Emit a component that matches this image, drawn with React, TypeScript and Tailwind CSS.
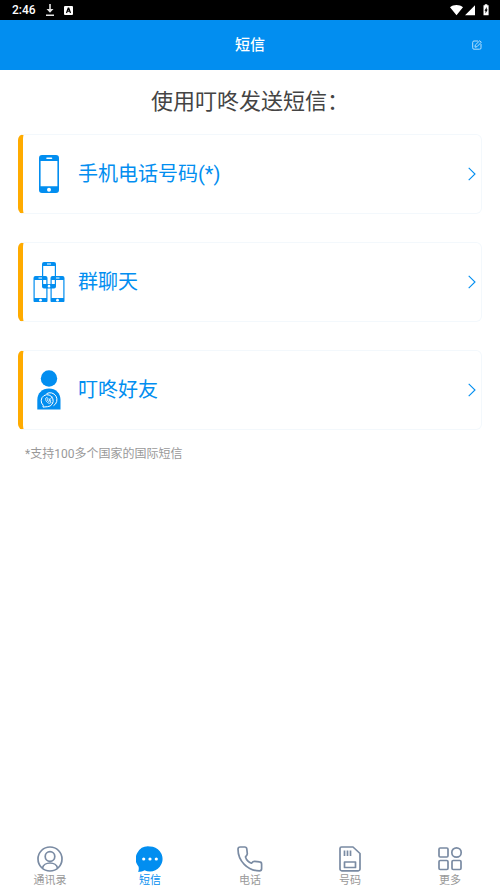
import type { FC, ReactNode } from 'react';

const PhoneShape: FC = () => (
  <>
    <path
      fillRule="evenodd"
      d="M3 0h14a3 3 0 0 1 3 3v32a3 3 0 0 1-3 3H3a3 3 0 0 1-3-3V3a3 3 0 0 1 3-3ZM1.6 6v25.2h16.8V6ZM8 2.5a.8.8 0 0 0 0 1.6h4.5a.8.8 0 0 0 0-1.6Z"
    />
    <circle cx="10" cy="34.8" r="2" fill="#fff" />
  </>
);

const PhoneIcon: FC = () => (
  <svg className="h-10 w-8" viewBox="0 0 32 40" fill="#028ef0">
    <g transform="translate(6 1)">
      <PhoneShape />
    </g>
  </svg>
);

const SmallPhone: FC<{ x: number; y: number }> = ({ x, y }) => (
  <g transform={`translate(${x} ${y})`}>
    <path
      fillRule="evenodd"
      d="M2 0h10a2 2 0 0 1 2 2v22.500a2 2 0 0 1-2 2H2a2 2 0 0 1-2-2V2a2 2 0 0 1 2-2ZM1.200 4v18h11.600V4ZM5 1.500v1h4v-1Z"
    />
    <circle cx="7" cy="24.2" r="1.400" fill="#fff" />
  </g>
);

const GroupIcon: FC = () => (
  <svg className="h-10 w-8" viewBox="0 0 32 40" fill="#028ef0">
    <SmallPhone x={9} y={0} />
    <SmallPhone x={0.5} y={14} />
    <SmallPhone x={17.5} y={14} />
  </svg>
);

const FriendIcon: FC = () => (
  <svg className="h-10 w-8" viewBox="0 0 32 40" fill="#028ef0">
    <circle cx="16" cy="8.500" r="8.200" />
    <path d="M4.300 39.500V30c0-7 5-11.500 11.700-11.500S27.500 23 27.500 30v9.500Z" />
    <g fill="none" stroke="#fff" strokeWidth="1">
      <path d="M10.200 35.200a6 6 0 1 1 4.300 1.500l-4.500.4Z" />
      <path d="M13.500 23.700a6.500 6.500 0 1 1 7 12" />
      <path d="M12.700 28.200c-.4 3 2 5.500 4.600 5l.8-1.200-1.500-1-1 .6c-.8-.4-1.200-1-1.300-1.900l.7-.8-.9-1.500Z" strokeWidth=".8" />
      <path d="m16.200 30.300 3.300-3.600m-3.300 1.800v1.800h2" strokeWidth=".8" />
    </g>
  </svg>
);

const options: { label: string; icon: ReactNode }[] = [
  { label: '手机电话号码(*)', icon: <PhoneIcon /> },
  { label: '群聊天', icon: <GroupIcon /> },
  { label: '叮咚好友', icon: <FriendIcon /> },
];

const tabs: { label: string; active?: boolean; icon: ReactNode }[] = [
  {
    label: '通讯录',
    icon: (
      <>
        <circle cx="14" cy="14" r="12" />
        <circle cx="14" cy="11.500" r="4.800" />
        <path d="M6.500 23c.6-3 3.800-5 7.500-5s6.900 2 7.500 5" />
      </>
    ),
  },
  {
    label: '短信',
    active: true,
    icon: (
      <>
        <path
          d="M14 1.500a12.500 12.500 0 1 1-5.500 23.700c-2 1.200-4.200 1.700-6.500 1.600.8-1.500 1-3 .6-5A12.500 12.500 0 0 1 14 1.500Z"
          fill="#028ef0"
          stroke="none"
        />
        <g fill="#fff" stroke="none">
          <circle cx="7.700" cy="14" r="1.600" />
          <circle cx="14" cy="14" r="1.600" />
          <circle cx="20.300" cy="14" r="1.600" />
        </g>
      </>
    ),
  },
  {
    label: '电话',
    icon: (
      <path d="M2 4.200C2 2.800 3 2 4.300 2h4.400c1.300 0 2 .8 2.100 2l.5 4.700c.1 1.300-.5 2-1.800 3.200.8 2.600 3.300 5.300 6 6.300 1-1.300 1.900-1.900 3.200-1.800l4.800.5c1.300.1 2.100.9 2.100 2.200v4.700c0 1.200-.8 2-2.100 2C11.500 25.800 2 15.700 2 4.200Z" />
    ),
  },
  {
    label: '号码',
    icon: (
      <>
        <path d="M5.500 2h11.500l7 6.500V24a1.800 1.800 0 0 1-1.800 1.800H5.800A1.800 1.800 0 0 1 4 24V3.500A1.500 1.500 0 0 1 5.500 2Z" />
        <path d="M8.500 5.500v5.500M11.500 5.500v5.500M14.500 5.500v5.500" />
        <path d="M8.500 17h11v5.500h-11Z" />
      </>
    ),
  },
  {
    label: '更多',
    icon: (
      <>
        <rect x="3" y="3" width="9" height="9" rx="1.200" />
        <circle cx="20.500" cy="7.500" r="4.700" />
        <rect x="3" y="15.500" width="9" height="9" rx="1.200" />
        <rect x="16" y="15.500" width="9" height="9" rx="1.200" />
      </>
    ),
  },
];

const StatusBar: FC = () => (
  <div className="flex h-5 items-center justify-between bg-black pl-3 pr-2 text-white">
    <div className="flex items-center">
      <span className="w-8 text-xs font-medium leading-5">2:46</span>
      <svg className="h-3 w-3" viewBox="0 0 12 12" fill="#e5e5e5">
        <path d="M5.200 0h1.600v5H9.500L6 8.700 2.500 5h2.700ZM2 10.500h8V12H2Z" />
      </svg>
      <svg className="ml-2 h-[9px] w-[9px]" viewBox="0 0 9 9">
        <rect width="9" height="9" rx="1" fill="#fff" />
        <path d="M2.500 7 4.200 2h.6L6.500 7M3.200 5.200h2.600" fill="none" stroke="#000" strokeWidth="1.200" />
      </svg>
    </div>
    <svg className="h-3 w-[42px]" viewBox="0 0 42 12" fill="#fff">
      <path d="M0 3.200C3.500.3 9.500.3 13 3.200L6.500 11.200ZM25 1.200v10H15ZM33.500 1.300h1.300V.3h2.500v1h1.300v10h-5.100Z" />
      <path d="M36.700 3v2.500h1L35.500 9.500V6.800h-1Z" fill="#000" />
    </svg>
  </div>
);

const App: FC = () => {
  return (
    <div className="flex min-h-screen w-full flex-col bg-white font-[Roboto,'Noto_Sans_CJK_SC',sans-serif]">
      <StatusBar />
      <header className="grid h-[50px] grid-cols-[1fr_auto_1fr] items-center bg-[#028ef0] px-[18px] text-white">
        <h1 className="col-start-2 text-[15px] font-medium leading-5">短信</h1>
        <button type="button" aria-label="写短信" className="justify-self-end">
          <svg className="h-[10px] w-[10px]" viewBox="0 0 10 10" fill="none" stroke="#b5dffb" strokeWidth="1">
            <path d="M6 1H2a1.300 1.300 0 0 0-1.300 1.300v5.500A1.300 1.300 0 0 0 2 9.200h5.500A1.300 1.300 0 0 0 9 7.800V4" />
            <path d="M3 7.200 3.300 5 7.800.7l1.500 1.500L5 6.700Z" />
          </svg>
        </button>
      </header>

      <main className="flex-1 px-[18px] pt-4">
        <h2 className="text-center text-[22px] leading-8 text-[#444]">使用叮咚发送短信：</h2>
        <div className="mt-4 flex flex-col gap-7">
          {options.map(option => (
            <button
              key={option.label}
              type="button"
              className="flex h-20 w-full items-center rounded-md border border-l-[5px] border-[#f3f8fc] border-l-[#ffab00] pl-[10px] pr-[5px] text-left"
            >
              {option.icon}
              <span className="ml-[13px] flex-1 text-[20px] leading-7 text-[#028ef0]">{option.label}</span>
              <svg className="h-[14px] w-2" viewBox="0 0 8 14" fill="none" stroke="#028ef0" strokeWidth="1.100">
                <path d="m.7.800 6.300 6.200-6.300 6.200" />
              </svg>
            </button>
          ))}
        </div>
        <p className="mt-[14px] pl-[7px] text-xs leading-5 text-[#999]">*支持100多个国家的国际短信</p>
      </main>

      <nav className="grid h-[43px] grid-cols-5">
        {tabs.map(tab => (
          <a key={tab.label} href="#" className="flex flex-col items-center">
            <svg className="h-7 w-7 shrink-0" viewBox="0 0 28 28" fill="none" stroke="#7a8ba3" strokeWidth="1.700" strokeLinejoin="round">
              {tab.icon}
            </svg>
            <span className={tab.active ? 'text-[11px] leading-4 text-[#028ef0]' : 'text-[11px] leading-4 text-[#999]'}>
              {tab.label}
            </span>
          </a>
        ))}
      </nav>
    </div>
  );
};

export default App;
